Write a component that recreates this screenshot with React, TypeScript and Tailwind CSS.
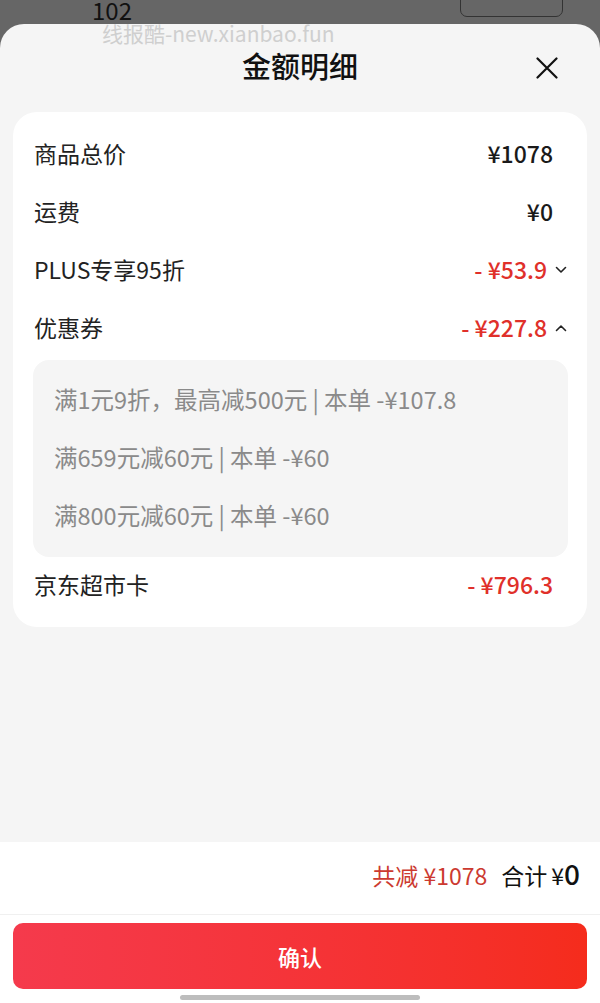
import React from 'react';

const font = { fontFamily: '"Noto Sans CJK SC", "Noto Sans", sans-serif' };

const Chevron = ({ up }: { up?: boolean }) => (
  <svg width="12" height="8" viewBox="0 0 12 8" fill="none">
    <path
      d={up ? 'M1.5 6.5 L6 2 L10.5 6.5' : 'M1.5 1.5 L6 6 L10.5 1.5'}
      stroke="#222"
      strokeWidth="1.6"
      strokeLinecap="round"
      strokeLinejoin="round"
    />
  </svg>
);

type Row = { label: string; value: string; red?: boolean; chevron?: 'up' | 'down' };

const rows: Row[] = [
  { label: '商品总价', value: '¥1078' },
  { label: '运费', value: '¥0' },
  { label: 'PLUS专享95折', value: '- ¥53.9', red: true, chevron: 'down' },
  { label: '优惠券', value: '- ¥227.8', red: true, chevron: 'up' },
];

const coupons = [
  '满1元9折，最高减500元 | 本单 -¥107.8',
  '满659元减60元 | 本单 -¥60',
  '满800元减60元 | 本单 -¥60',
];

const DetailRow = ({ label, value, red, chevron }: Row) => (
  <div className="h-[58px] flex items-center justify-between pl-[21px] pr-[20px] pb-[3px]">
    <span className="text-[23px] text-[#222]">{label}</span>
    <div className="flex items-center">
      <span className={`text-[23px] font-medium ${red ? 'text-[#e0302a]' : 'text-[#1a1a1a]'}`}>{value}</span>
      {chevron ? (
        <div className="w-[20px] flex justify-end">
          <Chevron up={chevron === 'up'} />
        </div>
      ) : (
        <div className="w-[14px]" />
      )}
    </div>
  </div>
);

export default function App() {
  return (
    <div className="w-[600px] h-[1003px] bg-[#666666] flex flex-col overflow-hidden" style={font}>
      {/* page behind the sheet */}
      <div className="h-[24px] flex justify-between items-start">
        <span className="ml-[92px] -mt-[3px] text-[24px] leading-[26px] text-[#111]">102</span>
        <div className="mr-[37px] -mt-[12px] w-[103px] h-[29px] rounded-[7px] border border-[#333]" />
      </div>

      {/* bottom sheet */}
      <div className="relative flex-1 bg-[#f5f5f5] rounded-t-[24px] flex flex-col">
        <span className="absolute left-[102px] top-[-4px] text-[21px] leading-[26px] text-[#cfcfcf]">
          线报酷-new.xianbao.fun
        </span>

        <div className="h-[88px] flex items-center justify-center relative">
          <h1 className="text-[29px] font-medium text-[#111] -mt-[4px]">金额明细</h1>
          <svg className="absolute right-[42px] top-[33px]" width="22" height="22" viewBox="0 0 22 22">
            <path d="M1.5 1.5 L20.5 20.5 M20.5 1.5 L1.5 20.5" stroke="#111" strokeWidth="2.2" strokeLinecap="round" />
          </svg>
        </div>

        <div className="mx-[13px] bg-white rounded-[24px] pt-[14px] pb-[12px]">
          {rows.map((r) => (
            <DetailRow key={r.label} {...r} />
          ))}
          <div className="mt-[2px] ml-[20px] mr-[19px] bg-[#f5f5f5] rounded-[16px] pt-[12px] pb-[11px] pl-[21px]">
            {coupons.map((c) => (
              <div key={c} className="h-[58px] flex items-center pb-[3px] text-[23.5px] text-[#8a8a8a]">
                {c}
              </div>
            ))}
          </div>
          <DetailRow label="京东超市卡" value="- ¥796.3" red />
        </div>

        <div className="flex-1" />

        <div className="bg-white pb-[3px]">
          <div className="h-[73px] flex items-center justify-end pr-[20px] pb-[6px] border-b border-[#f0f0f0]">
            <span className="text-[23px] text-[#cc3a30]">共减 ¥1078</span>
            <span className="ml-[14px] text-[23px] text-[#111]">合计</span>
            <span className="ml-[4px] text-[23px] text-[#111]">¥</span>
            <span className="text-[28px] font-medium text-[#111] leading-none -mt-[4px]">0</span>
          </div>
          <div className="pt-[8px] px-[13px] flex flex-col items-center">
            <button className="w-full h-[66px] rounded-[10px] bg-gradient-to-r from-[#f53a4c] to-[#f52c1c] text-white text-[22px] font-medium">
              确认
            </button>
            <div className="mt-[6px] w-[240px] h-[5px] rounded-full bg-[#bdbdbd]" />
          </div>
        </div>
      </div>
    </div>
  );
}
